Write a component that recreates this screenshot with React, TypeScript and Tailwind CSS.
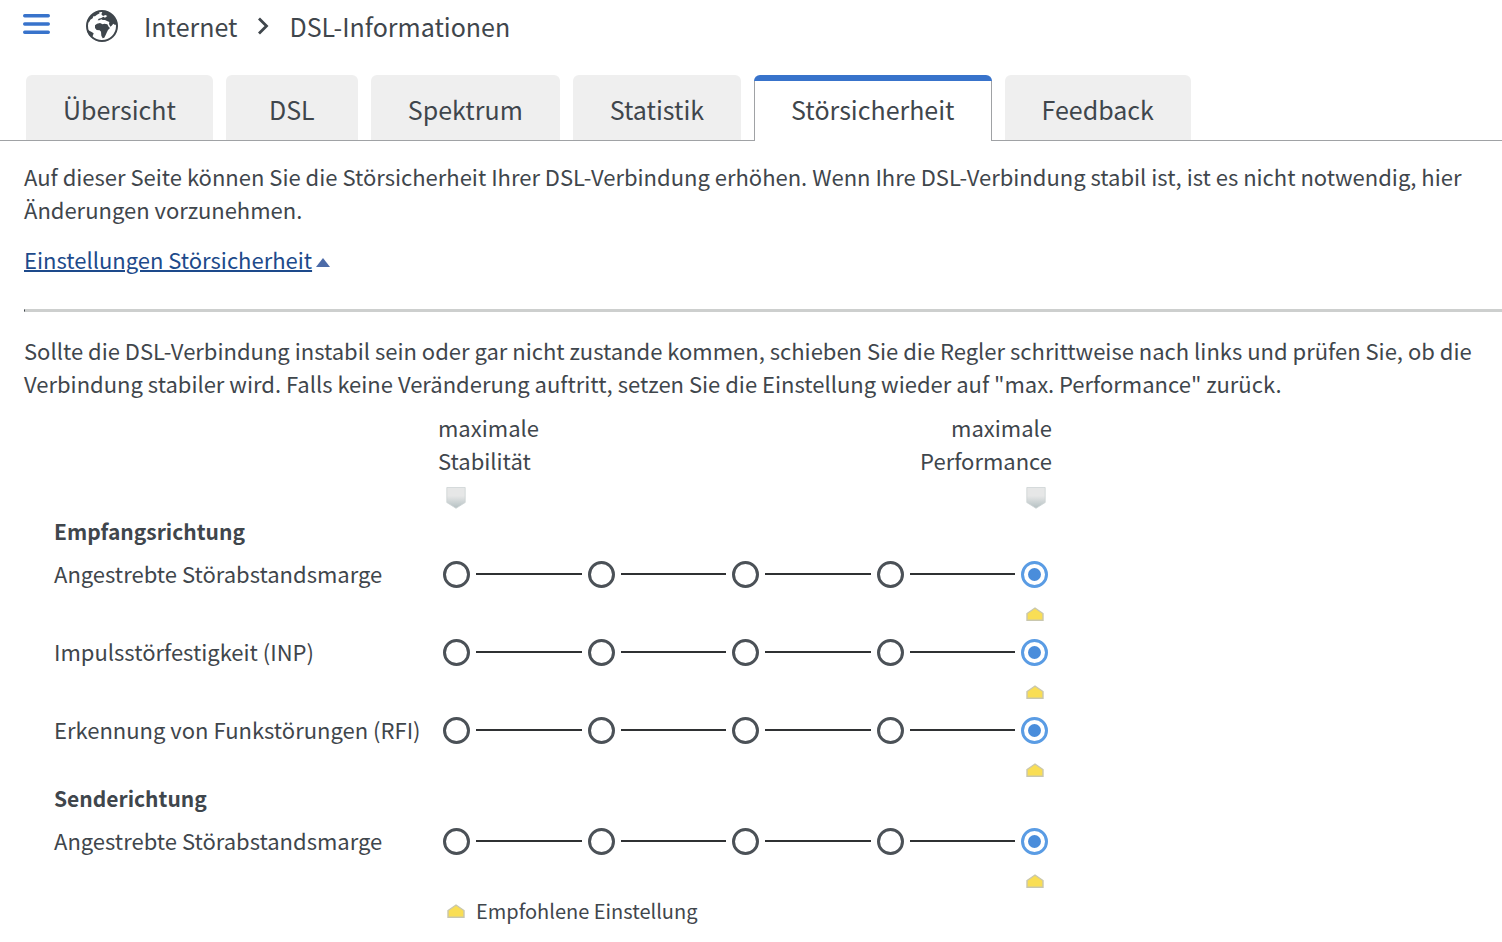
import React, { useState } from 'react';

const tabs = ['Übersicht', 'DSL', 'Spektrum', 'Statistik', 'Störsicherheit', 'Feedback'];

// sliders grouped by direction, every slider has 5 steps
const groups = [
  {
    title: 'Empfangsrichtung',
    rows: [
      { id: 'ds-margin', label: 'Angestrebte Störabstandsmarge' },
      { id: 'ds-inp', label: 'Impulsstörfestigkeit (INP)' },
      { id: 'ds-rfi', label: 'Erkennung von Funkstörungen (RFI)' },
    ],
  },
  {
    title: 'Senderichtung',
    rows: [{ id: 'us-margin', label: 'Angestrebte Störabstandsmarge' }],
  },
];

const steps = [0, 1, 2, 3, 4];

const GlobeIcon = () => (
  <svg className="size-8 shrink-0" viewBox="0 0 96 96" fill="#3f464c" aria-hidden="true">
    <circle cx="48" cy="48" r="45" fill="none" stroke="#3f464c" strokeWidth="6" />
    <path d="M50 4 Q72 4 86 25 L93 42 L87 45 L82 41 L77 47 L73 50 L69 42 L70 36 L63 33 L57 30 L50 30 L46 28 L40 31 L35 31 L38 26 L46 24 L52 20 L57 23 L64 18 L58 15 L51 18 L46 13 Z" />
    <path d="M27 46 L33 41 L42 39 L50 43 L55 41 L64 43 L68 50 L72 54 L66 60 L62 68 L59 75 L55 83 L50 85 L46 77 L45 65 L41 61 L32 60 L27 54 Z" />
    <path d="M8 28 Q18 10 38 4 L41 10 L33 14 L27 19 L22 19 L20 25 L13 29 L10 35 L5 39 Z" />
    <path d="M4 58 L10 62 L17 66 L23 70 L21 76 L18 82 L10 76 L5 67 Z" />
  </svg>
);

// grey pointer above the first and last step
const Pointer = () => (
  <svg className="h-[22px] w-5" viewBox="0 0 20 22" aria-hidden="true">
    <defs>
      <linearGradient id="pointer" x1="0" y1="0" x2="0" y2="1">
        <stop offset="0.4" stopColor="#e6e7e7" />
        <stop offset="1" stopColor="#b4c0c2" />
      </linearGradient>
    </defs>
    <path d="M.8 .5H19.2V15.5L10 21.3L.8 15.5Z" fill="url(#pointer)" stroke="#cdd3d4" strokeWidth=".8" />
  </svg>
);

// yellow marker for the recommended setting
const Recommended = () => (
  <svg className="h-[14px] w-[18px]" viewBox="0 0 18 14" aria-hidden="true">
    <path d="M1 13.2V6.5L9 1L17 6.5V13.2Z" fill="#f9de55" stroke="#c9c7ae" strokeWidth="1.4" />
  </svg>
);

const Slider = ({ id, label }: { id: string; label: string }) => {
  const [value, setValue] = useState(4);

  return (
    <div className="mt-1 flex" role="radiogroup" aria-labelledby={id}>
      <div id={id} className="w-[389px] shrink-0 leading-[40px] whitespace-nowrap">
        {label}
      </div>
      <div className="w-[605px]">
        <div className="flex h-[42px] items-center">
          {steps.map((step) => (
            <React.Fragment key={step}>
              {step > 0 && <span className="mx-[6px] h-[2px] flex-1 bg-[#2f3133]"></span>}
              <input
                type="radio"
                name={id}
                aria-label={`${label} ${step + 1}`}
                checked={value === step}
                onChange={() => setValue(step)}
                className="size-[27px] shrink-0 appearance-none rounded-full border-3 border-[#4b5157] bg-clip-content p-[4px] checked:border-[#5a9ce4] checked:bg-[#4a8ddb]"
              />
            </React.Fragment>
          ))}
        </div>
        <div className="flex h-8 justify-end pt-3 pr-1">
          <Recommended />
        </div>
      </div>
    </div>
  );
};

const App: React.FC = () => {
  return (
    <div className="min-h-screen overflow-x-hidden bg-white font-['Noto_Sans_CJK_SC',sans-serif] text-[22px] leading-[33px] text-[#3f464c]">
      <header className="flex h-[75px] items-start pl-[23px]">
        <button type="button" aria-label="Menü" className="mt-[14px] mr-9">
          <svg className="h-5 w-[27px]" viewBox="0 0 27 20" stroke="#3873cb" strokeWidth="3.4" strokeLinecap="round">
            <path d="M1.7 1.7H25.3M1.7 10H25.3M1.7 18.3H25.3" />
          </svg>
        </button>
        <div className="mt-[10px]">
          <GlobeIcon />
        </div>
        <nav className="ml-[26px] flex h-[52px] items-center text-[25px]">
          <a href="#internet">Internet</a>
          <svg className="mx-5 h-[18px] w-3" viewBox="0 0 12 18" fill="none" stroke="#3f464c" strokeWidth="2.8" aria-hidden="true">
            <path d="M2 1.5L9.5 9L2 16.5" />
          </svg>
          <a href="#dsl">DSL-Informationen</a>
        </nav>
      </header>

      <nav className="flex h-[66px] gap-[13px] border-b border-[#a0a2a5] pl-[26px] text-[25px]">
        {tabs.map((tab) =>
          tab === 'Störsicherheit' ? (
            <a
              key={tab}
              href="#tab"
              aria-current="page"
              className="relative -mb-px flex flex-col overflow-hidden rounded-t-md bg-white"
            >
              <span className="h-[6px] bg-[#3873cb]"></span>
              <span className="flex flex-1 items-center border-x border-[#a0a2a5] px-9 pb-1">{tab}</span>
            </a>
          ) : (
            <a
              key={tab}
              href="#tab"
              className="flex min-w-[132px] items-center justify-center rounded-t-md bg-[#efefef] px-[37px] pt-1"
            >
              {tab}
            </a>
          ),
        )}
      </nav>

      <main className="pt-[19px] pl-6">
        <p>
          Auf dieser Seite können Sie die Störsicherheit Ihrer DSL-Verbindung erhöhen. Wenn Ihre DSL-Verbindung stabil
          ist, ist es nicht notwendig, hier Änderungen vorzunehmen.
        </p>

        <a href="#settings" className="mt-[17px] inline-flex items-center gap-1 text-[#1d4a8b]">
          <span className="underline decoration-2 underline-offset-1">Einstellungen Störsicherheit</span>
          <svg className="mt-[6px] h-[9px] w-[14px]" viewBox="0 0 14 9" aria-hidden="true">
            <path d="M0 9L7 0L14 9Z" fill="#4c6ba8" />
          </svg>
        </a>

        <hr className="mt-[33px] h-[3px] border-y border-l border-[#cdcfce] border-l-[#3f464c] bg-[#cdcfce]" />

        <p className="mt-[22px]">
          Sollte die DSL-Verbindung instabil sein oder gar nicht zustande kommen, schieben Sie die Regler schrittweise
          nach links und prüfen Sie, ob die Verbindung stabiler wird. Falls keine Veränderung auftritt, setzen Sie die
          Einstellung wieder auf "max. Performance" zurück.
        </p>

        <div className="mt-[11px] pl-[30px]">
          <div className="ml-[384px] flex w-[614px] justify-between">
            <div>
              maximale
              <br />
              Stabilität
              <div className="mt-[10px] ml-2">
                <Pointer />
              </div>
            </div>
            <div className="text-right">
              maximale
              <br />
              Performance
              <div className="mt-[10px] mr-[6px] flex justify-end">
                <Pointer />
              </div>
            </div>
          </div>

          <div className="mt-[7px]">
            {groups.map((group) => (
              <section key={group.title}>
                <h2 className="mb-[6px] text-[21px] leading-[31px] font-bold">{group.title}</h2>
                {group.rows.map((row) => (
                  <Slider key={row.id} id={row.id} label={row.label} />
                ))}
              </section>
            ))}
          </div>

          <div className="ml-[393px] flex items-center gap-[11px] text-[20px]">
            <Recommended />
            Empfohlene Einstellung
          </div>
        </div>
      </main>
    </div>
  );
};

export default App;
